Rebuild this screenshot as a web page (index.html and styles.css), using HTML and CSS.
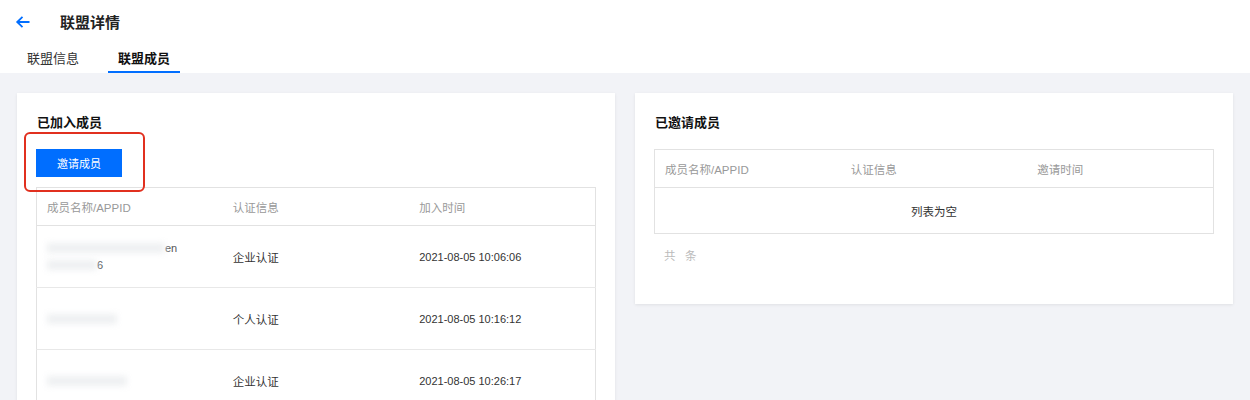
FILE: index.html
```html
<!DOCTYPE html>
<html lang="zh-CN">
<head>
    <meta charset="UTF-8">
    <title>联盟详情</title>
    <link rel="stylesheet" href="styles.css">
</head>
<body>
    <div class="topbar">
        <div class="title-row">
            <svg class="back" width="16" height="16" viewBox="0 0 16 16">
                <path d="M14.5 8H2.2M7.5 2.8L2.2 8l5.3 5.2" fill="none" stroke="#006eff" stroke-width="1.8"/>
            </svg>
            <h1>联盟详情</h1>
        </div>
        <div class="tabs">
            <div class="tab">联盟信息</div>
            <div class="tab active">联盟成员</div>
        </div>
    </div>

    <div class="content">
        <div class="card">
            <h2>已加入成员</h2>
            <div class="btn-wrap">
                <button class="btn">邀请成员</button>
                <div class="mark"></div>
            </div>
            <table class="table">
                <thead>
                    <tr><th>成员名称/APPID</th><th>认证信息</th><th>加入时间</th></tr>
                </thead>
                <tbody>
                    <tr class="row">
                        <td>
                            <div class="name">
                                <div class="line"><span class="smudge w1"></span><span class="peek">en</span></div>
                                <div class="line"><span class="smudge w2"></span><span class="peek">6</span></div>
                            </div>
                        </td>
                        <td>企业认证</td>
                        <td class="date">2021-08-05 10:06:06</td>
                    </tr>
                    <tr class="row">
                        <td>
                            <div class="name">
                                <div class="line"><span class="smudge w3"></span></div>
                            </div>
                        </td>
                        <td>个人认证</td>
                        <td class="date">2021-08-05 10:16:12</td>
                    </tr>
                    <tr class="row">
                        <td>
                            <div class="name">
                                <div class="line"><span class="smudge w4"></span></div>
                            </div>
                        </td>
                        <td>企业认证</td>
                        <td class="date">2021-08-05 10:26:17</td>
                    </tr>
                </tbody>
            </table>
        </div>

        <div class="card small">
            <h2>已邀请成员</h2>
            <table class="table">
                <thead>
                    <tr><th>成员名称/APPID</th><th>认证信息</th><th>邀请时间</th></tr>
                </thead>
                <tbody>
                    <tr class="empty"><td colspan="3">列表为空</td></tr>
                </tbody>
            </table>
            <div class="total">共&nbsp;&nbsp;&nbsp;条</div>
        </div>
    </div>
</body>
</html>
```

FILE: styles.css
```css
body {
    margin: 0;
    background: #f2f3f7;
    font-family: "Liberation Sans", "Noto Sans CJK SC", sans-serif;
    color: #333;
    height: 400px;
    overflow: hidden;
}

.topbar {
    background: #fff;
}

.title-row {
    height: 43px;
    display: flex;
    align-items: center;
    padding-left: 15px;
}

.back {
    margin-right: 29px;
}

h1 {
    margin: 0;
    font-size: 15px;
    font-weight: 700;
    color: #222;
}

.tabs {
    display: flex;
    gap: 20px;
    padding-left: 18px;
    height: 30px;
}

.tab {
    padding: 6px 9px 0;
    line-height: 20px;
    font-size: 13px;
    color: #333;
    border-bottom: 2px solid transparent;
    height: 22px;
}

.tab.active {
    padding: 6px 10px 0;
    font-weight: 700;
    color: #111;
    border-bottom-color: #006eff;
}

.content {
    display: flex;
    gap: 20px;
    align-items: flex-start;
    padding: 20px 17px;
}

.card {
    flex: 1;
    background: #fff;
    box-shadow: 0 1px 3px rgba(0,0,0,0.08);
    padding: 20px 19px 40px;
}

.card.small {
    padding-bottom: 38px;
}

h2 {
    margin: 0 0 16px 1px;
    font-size: 13px;
    line-height: 20px;
    font-weight: 700;
    color: #111;
}

.btn-wrap {
    position: relative;
    height: 28px;
    margin-bottom: 10px;
}

.btn {
    width: 86px;
    height: 28px;
    border: none;
    background: #006eff;
    color: #fff;
    font-family: inherit;
    font-size: 11px;
    padding: 0;
}

.mark {
    position: absolute;
    left: -12px;
    top: -17px;
    width: 117px;
    height: 56px;
    border: 2px solid #e1301f;
    border-radius: 6px;
}

.table {
    width: 100%;
    border-collapse: collapse;
    table-layout: fixed;
    border: 1px solid #e2e2e2;
    font-size: 11.5px;
}

.table th {
    height: 37px;
    padding: 0 10px;
    text-align: left;
    font-weight: 400;
    color: #999;
    border-bottom: 1px solid #e2e2e2;
}

.row td {
    height: 61px;
    padding: 0 10px;
    border-bottom: 1px solid #e8e8e8;
    color: #333;
}

.date {
    font-size: 11px;
}

.name {
    display: flex;
    flex-direction: column;
    gap: 3px;
}

.line {
    display: flex;
    align-items: center;
    height: 14px;
}

.smudge {
    display: inline-block;
    height: 10px;
    background: #eef0f2;
    filter: blur(3px);
}

.w1 { width: 118px; }
.w2 { width: 50px; }
.w3 { width: 70px; }
.w4 { width: 80px; }

.peek {
    font-size: 11px;
    color: #555;
}

.empty td {
    height: 43px;
    text-align: center;
    font-size: 11.5px;
    color: #333;
}

.total {
    margin-top: 12px;
    padding-left: 10px;
    line-height: 20px;
    font-size: 11.5px;
    color: #bbb;
}
```
